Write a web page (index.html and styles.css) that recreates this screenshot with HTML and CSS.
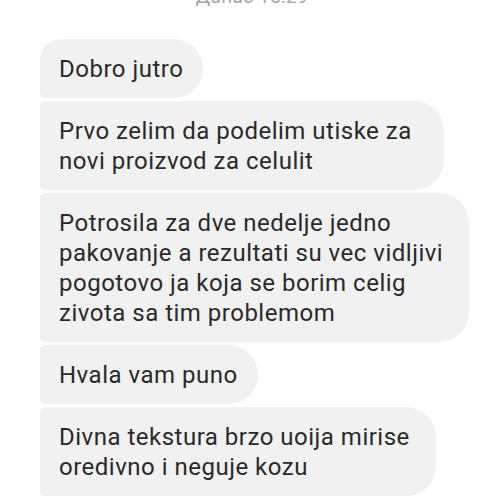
FILE: index.html
```html
<!DOCTYPE html>
<html>
<head>
<meta charset="utf-8">
<link rel="stylesheet" href="styles.css">
</head>
<body>
<div class="stamp">Данас 15:29</div>
<div class="thread">
  <div class="bubble first">Dobro jutro</div>
  <div class="bubble loose">Prvo zelim da podelim utiske za<br>novi proizvod za celulit</div>
  <div class="bubble mid">Potrosila za dve nedelje jedno<br>pakovanje a rezultati su vec vidljivi<br>pogotovo ja koja se borim celig<br>zivota sa tim problemom</div>
  <div class="bubble">Hvala vam puno</div>
  <div class="bubble mid">Divna tekstura brzo uoija mirise<br>oredivno i neguje kozu</div>
</div>
</body>
</html>
```

FILE: styles.css
```css
html, body {
  margin: 0;
  padding: 0;
  background: #ffffff;
  overflow: hidden;
}
body {
  width: 500px;
  height: 500px;
  font-family: Roboto, "Noto Sans", sans-serif;
}
.stamp {
  margin-top: -13px;
  height: 20px;
  line-height: 20px;
  font-size: 19px;
  letter-spacing: 0.4px;
  color: #a3a3a3;
  text-align: center;
  padding-left: 4px;
}
.thread {
  margin-top: 32px;
  padding-left: 40px;
  display: flex;
  flex-direction: column;
  align-items: flex-start;
  gap: 3px;
}
.bubble {
  background: #f1f1f1;
  color: #2a2a2a;
  font-size: 24px;
  line-height: 30px;
  letter-spacing: 0.5px;
  padding: 14.5px 20px 14.5px 19px;
  border-radius: 5px 30px 30px 5px;
  white-space: nowrap;
}
.bubble.first {
  border-radius: 22px 30px 30px 5px;
}
.bubble.loose {
  padding-right: 32px;
}
.bubble.mid {
  padding-right: 26px;
}
```
